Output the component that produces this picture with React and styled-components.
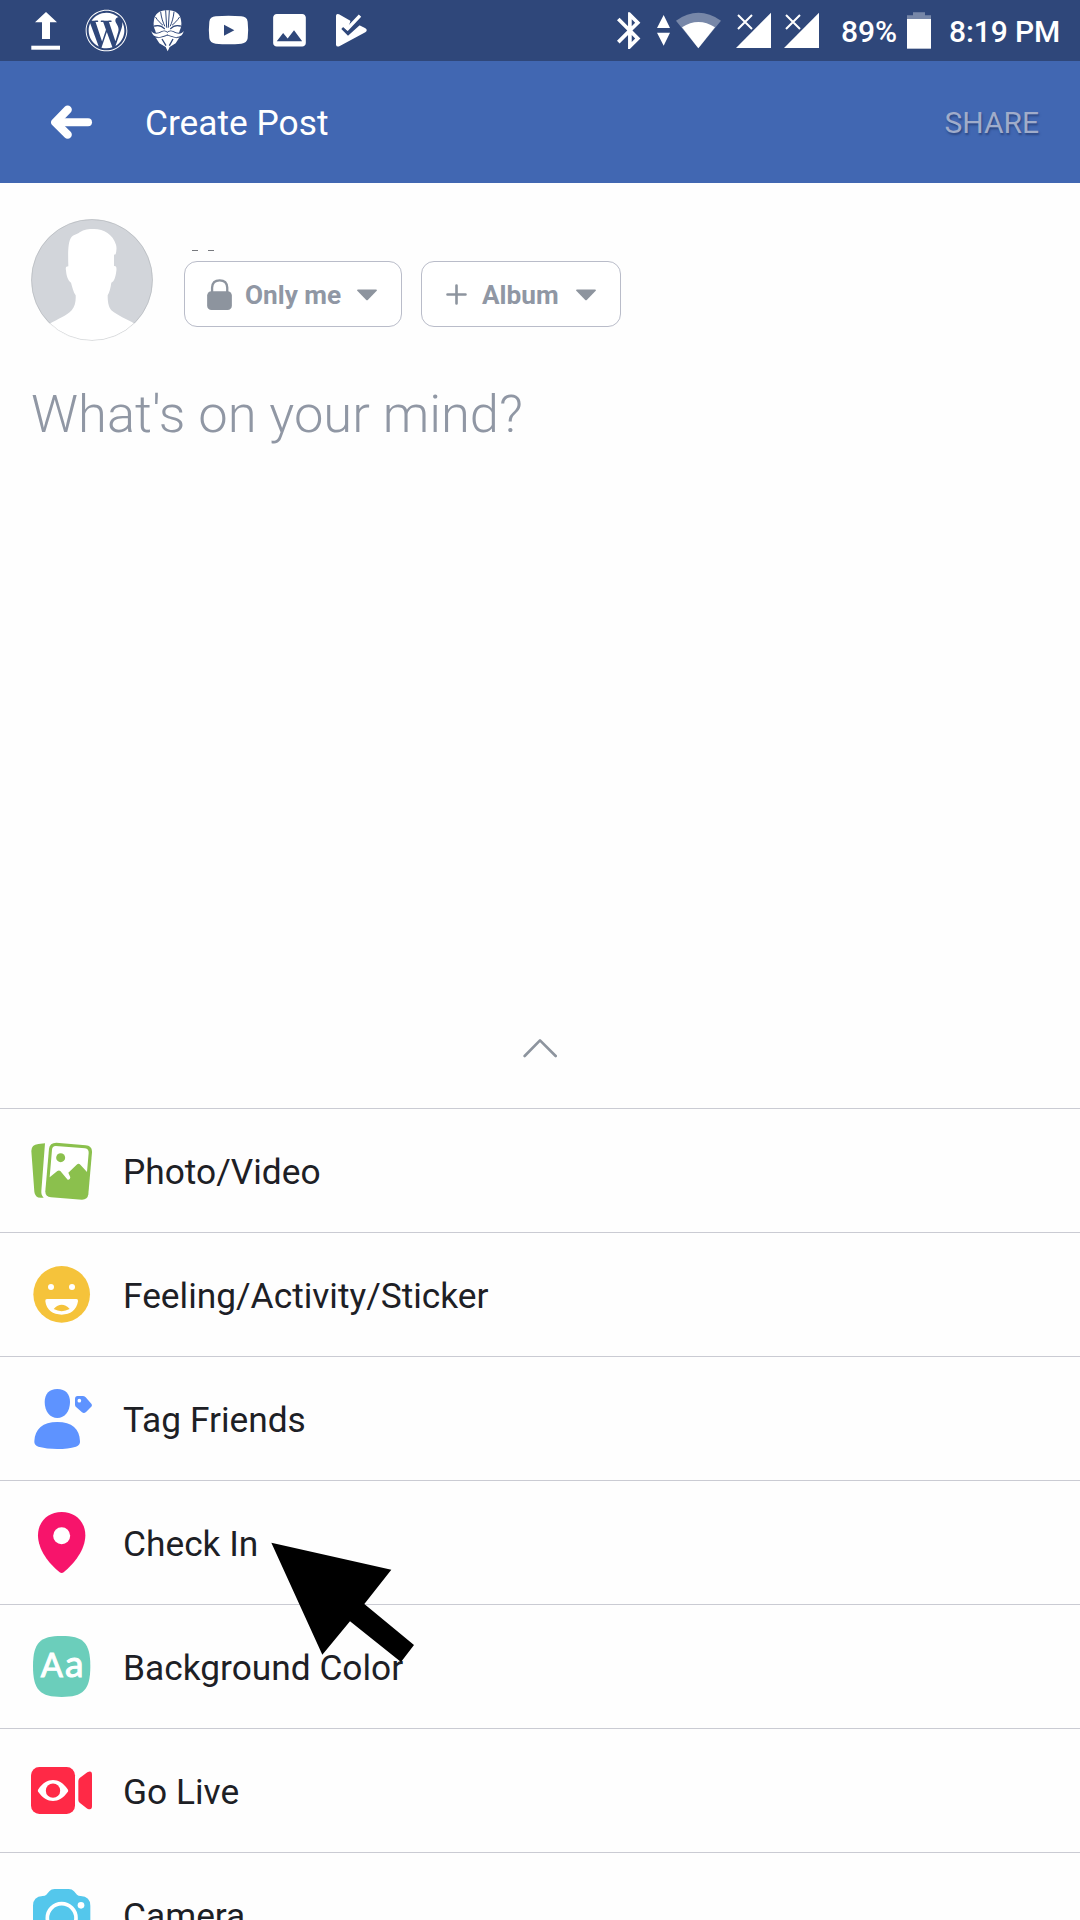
import styled, { createGlobalStyle } from "styled-components"
import { FaWordpress } from "react-icons/fa"

const GlobalStyle = createGlobalStyle`
    * {
      box-sizing: border-box;
    }
    body {
      margin: 0;
      background: #fff;
      font-family: Roboto, "Liberation Sans", sans-serif;
      overflow: hidden;
    }
    svg {
      display: block;
      flex: none;
    }
`

const Screen = styled.div`
    position: relative;
    width: 1080px;
    height: 1920px;
    display: flex;
    flex-direction: column;
    background: #fefefe;
    overflow: hidden;
`

const StatusBar = styled.div`
    flex: none;
    height: 61px;
    padding-left: 15px;
    display: flex;
    justify-content: space-between;
    background: #2f477a;
    color: #fff;
`

const StatusGroup = styled.div`
    display: flex;
    align-items: center;
`

const Slot = styled.div`
    width: 61px;
    height: 61px;
    padding-left: 9px;
    display: flex;
    align-items: center;
`

const StatusText = styled.span`
    width: ${(props) => props.$width}px;
    margin-left: ${(props) => props.$left}px;
    padding-top: 2px;
    font-size: 30px;
    line-height: 36px;
    font-weight: 500;
    white-space: nowrap;
    letter-spacing: ${(props) => props.$spacing || 0}px;
`

const Header = styled.header`
    flex: none;
    height: 122px;
    padding: 0 41px 0 51px;
    display: flex;
    align-items: center;
    background: #4167b2;
`

const Title = styled.h1`
    flex: 1;
    margin: 0 0 0 52px;
    padding-top: 1px;
    color: #fff;
    font-size: 35.300px;
    line-height: 42px;
    font-weight: 400;
`

const Share = styled.button`
    border: none;
    padding: 2px 0 0;
    background: none;
    color: #a0acca;
    font-family: inherit;
    font-size: 30px;
    line-height: 36px;
    text-shadow: 1px 2px 2px rgba(30, 50, 100, 0.6);
`

const Composer = styled.main`
    flex: none;
    height: 925px;
    padding: 36px 31px 0;
    display: flex;
    flex-direction: column;
`

const Author = styled.div`
    display: flex;
    gap: 31px;
`

const AuthorInfo = styled.div`
    display: flex;
    flex-direction: column;
    padding-top: 30px;
`

const Name = styled.div`
    display: flex;
    gap: 10px;
    height: 12px;
    padding-left: 8px;
`

const Dash = styled.span`
    width: 6px;
    height: 1px;
    margin-top: 1px;
    background: #77797e;
`

const Pills = styled.div`
    display: flex;
    gap: 19px;
`

const Pill = styled.button`
    width: ${(props) => props.$width}px;
    height: 66px;
    padding: 1px 24px 0 ${(props) => props.$left}px;
    display: flex;
    align-items: center;
    border: 1px solid #b9bcc9;
    border-radius: 13px;
    background: #fff;
    color: #8d949e;
    font-family: inherit;
    font-size: 26.200px;
    font-weight: 700;
`

const PillLabel = styled.span`
    flex: 1;
    padding-left: ${(props) => props.$left}px;
    color: #9097a4;
    text-align: left;
    white-space: nowrap;
`

const Prompt = styled.p`
    margin: 42px 0 0;
    color: #9097a4;
    font-size: 52.500px;
    line-height: 62px;
    font-weight: 300;
`

const Handle = styled.div`
    margin-top: auto;
    height: 70px;
    display: flex;
    justify-content: center;
`

const Options = styled.ul`
    margin: 0;
    padding: 0;
    list-style: none;
`

const Option = styled.li`
    height: 124px;
    padding-left: 31px;
    display: flex;
    align-items: center;
    gap: 31px;
    border-top: 1px solid #cacbd3;
    color: #1d2025;
    font-size: 35.300px;
    line-height: 42px;
`

const OptionLabel = styled.span`
    padding-top: 3px;
`

const Pointer = styled.svg`
    position: absolute;
    left: 271px;
    top: 1542px;
`

const UploadIcon = () => (
  <svg width="61" height="61" fill="#fff">
    <path d="M31 12L42 22.300H35V39H27V22.300H20Z" />
    <rect x="16.300" y="45.700" width="28.700" height="4" />
  </svg>
)

// bearded mask with swept strands of hair
const MaskIcon = () => (
  <svg width="61" height="61" viewBox="411 0 183 183" fill="#fff">
    <path d="M502 31C478 30 465 42 462 60C459 74 462 84 466 92L470 110L486 125L503 145L519 125L534 110L539 92C543 84 546 74 543 60C540 42 527 30 502 31Z" />
    <path d="M466 111L482 117L494 113L502 110L511 113L523 117L539 111L527 130L509 141L503 154L497 141L478 130Z" />
    <g fill="none" stroke="#2f477a" strokeWidth="3" strokeLinecap="round">
      <path d="M497 32L500 82M508 32L505 82M482 36C484 54 489 67 494 78M522 36C520 54 516 67 511 78M467 52C474 63 481 69 488 75M538 52C531 63 524 69 517 75" />
      <path d="M464 78C475 75 486 78 493 86M541 78C530 75 519 78 512 86" strokeWidth="4" />
    </g>
    <path stroke="#2f477a" strokeWidth="5" paintOrder="stroke" d="M454 93C461 104 473 102 485 96C493 92 499 95 502 99C505 95 512 92 520 96C532 102 544 104 551 93C549 107 538 113 522 110C512 108 506 106 502 103C498 106 493 108 483 110C467 113 457 107 454 93Z" />
    <path fill="none" stroke="#2f477a" strokeWidth="4" d="M486 117L498 137M519 117L508 137" />
  </svg>
)

const YoutubeIcon = () => (
  <svg width="61" height="61" viewBox="594 0 183 183">
    <path fill="#fff" d="M647 49Q686 46 724 49Q741 50 743 65Q746 90 743 115Q741 130 724 131Q686 134 647 131Q630 130 628 115Q625 90 628 65Q630 50 647 49Z" />
    <path fill="#2f477a" d="M672 74V107L703 90.500Z" />
  </svg>
)

const GalleryIcon = () => (
  <svg width="61" height="61" fill="#fff">
    <path transform="translate(8.700 8.500) scale(1.815)" d="M21 19V5c0-1.100-.9-2-2-2H5c-1.100 0-2 .9-2 2v14c0 1.100.9 2 2 2h14c1.100 0 2-.9 2-2zM8.500 13.500l2.500 3.010L14.500 12l4.500 6H5l3.500-4.500z" />
  </svg>
)

const PlayCheckIcon = () => (
  <svg width="61" height="61" viewBox="960 0 183 183">
    <path fill="#fff" d="M1008 47Q1009 39 1017 43L1051 62L1095 84Q1105 90 1096 97L1018 139Q1009 142 1008 134Z" />
    <path fill="#2f477a" d="M1052 61L1072 40L1092 50L1079 76L1044 107L1024 87L1030 80L1042 92Z" />
    <path fill="none" stroke="#fff" strokeWidth="10" d="M1023 69L1043 86L1080 47" />
  </svg>
)

const BluetoothIcon = () => (
  <svg width="40" height="61" fill="#fff">
    <path transform="translate(-2.200 8.500) scale(1.840)" d="M17.710 7.710L12 2h-1v7.590L6.410 5 5 6.410 10.590 12 5 17.590 6.410 19 11 14.410V22h1l5.710-5.710-4.300-4.290 4.300-4.290zM13 5.830l1.880 1.880L13 9.590V5.830zm1.880 10.460L13 18.170v-3.760l1.880 1.880z" />
  </svg>
)

const WifiIcon = () => (
  <svg width="80" height="61" viewBox="150 0 240 183" fill="#fff">
    <path d="M191 45L210 84H171ZM171 98H210L191 137Z" />
    <path opacity=".35" d="M228 62Q295 15 363 62L295 145Z" />
    <path d="M246 82Q295 50 345 82L295 145Z" />
  </svg>
)

const SignalIcon = () => (
  <svg width="48" height="61" viewBox="390 0 144 183">
    <path fill="#fff" d="M513 38V144H408Z" />
    <path fill="none" stroke="#fff" strokeWidth="6" d="M414 45L456 87M456 45L414 87" />
  </svg>
)

const BatteryIcon = () => (
  <svg width="38" height="61" viewBox="906 0 114 183" fill="#fff">
    <path opacity=".35" d="M939 37H975V46H993V60H921V46H939Z" />
    <path d="M921 57H993V146H921Z" />
  </svg>
)

const BackIcon = () => (
  <svg width="42" height="34" viewBox="153 317 126 102" fill="none" stroke="#fff" strokeLinecap="round" strokeLinejoin="round">
    <path strokeWidth="24" d="M177 369H264" />
    <path strokeWidth="25" d="M203 331L166 369L203 406" />
  </svg>
)

const Avatar = () => (
  <svg width="122" height="122" viewBox="93 57 366 366">
    <clipPath id="face">
      <circle cx="276" cy="240" r="182" />
    </clipPath>
    <g clipPath="url(#face)">
      <rect x="93" y="57" width="366" height="366" fill="#d2d5da" />
      <path fill="#fff" d="M205 199C204 160 203 128 214 112C221 103 232 104 239 97C252 88 266 87 282 87C312 87 338 103 348 134C351 145 349 154 347 163L342 164V198C350 197 350 205 349 213C347 229 343 245 334 248C332 263 328 278 323 286C323 305 325 320 334 331C354 348 382 358 404 371L440 440H110L149 371C173 358 200 347 215 331C225 320 228 303 227 286C220 276 217 262 213 248C204 243 199 227 198 211C196 203 198 199 205 199Z" />
    </g>
    <circle cx="276" cy="240" r="181.500" fill="none" stroke="#a5a8ad" strokeWidth="2" opacity=".7" />
    <path d="M149 371A181.500 181.500 0 0 0 404 371" fill="none" stroke="#fff" strokeWidth="3" opacity=".65" />
  </svg>
)

const LockIcon = () => (
  <svg width="25" height="31" viewBox="621 236 75 94">
    <path fill="none" stroke="#8d949e" strokeWidth="7" d="M636 278V262Q637 240 659 240Q681 240 682 262V278" />
    <rect x="621" y="273" width="75" height="57" rx="13" fill="#8d949e" />
  </svg>
)

const PlusIcon = () => (
  <svg width="21" height="21" fill="none" stroke="#8d949e" strokeWidth="2.600" strokeLinecap="round">
    <path d="M10.500 1.500V19.500M1.500 10.500H19.500" />
  </svg>
)

const CaretIcon = () => (
  <svg width="20" height="12" fill="#8d949e">
    <path d="M1 .5H19Q20.500 .7 19.500 2L11 10.700Q10 11.700 9 10.700L.5 2Q-.5 .7 1 .5Z" />
  </svg>
)

const ChevronIcon = () => (
  <svg width="34" height="20" viewBox="129 84 102 60" fill="none" stroke="#8d949e" strokeWidth="8" strokeLinecap="round" strokeLinejoin="round">
    <path d="M134 138L180 91L227 138" />
  </svg>
)

const PhotoIcon = () => (
  <svg width="61" height="61" viewBox="93 120 183 183">
    <path fill="#8bc04d" d="M115 132L135 130L124 273Q123 286 131 293H122Q105 293 103 275L94 153Q94 134 115 132Z" />
    <path fill="#8bc04d" d="M169 128L257 136Q277 138 276 157L265 283Q263 299 246 299L153 292Q135 290 136 273L147 146Q149 128 169 128Z" />
    <path fill="#fff" d="M167 138L255 145Q267 147 266 159L261 216L241 194Q236 189 230 194L205 218L211 232Q210 241 203 239L181 213Q177 210 172 213L149 232L156 149Q157 138 167 138Z" />
    <circle cx="182" cy="173" r="13.500" fill="#8bc04d" />
  </svg>
)

const SmileIcon = () => (
  <svg width="61" height="61" viewBox="93 492 183 183">
    <circle cx="185" cy="583" r="85" fill="#f5c33b" />
    <g fill="#fff">
      <circle cx="153" cy="561" r="9" />
      <circle cx="216" cy="561" r="9" />
      <path d="M141 597H229Q235 597 234 604C230 630 211 644 185 644S139 630 136 604Q135 597 141 597Z" />
    </g>
    <path fill="#f5c33b" d="M161 627Q185 602 209 627Q185 640 161 627Z" />
  </svg>
)

const TagIcon = () => (
  <svg width="61" height="61" viewBox="93 114 183 183">
    <g fill="#5e93ff">
      <path d="M172 117C197 117 210 133 210 156C210 184 194 204 172 204S134 184 134 156C134 133 147 117 172 117Z" />
      <path d="M172 216C216 216 239 236 240 274Q241 286 228 290Q204 297 172 297T115 290Q102 286 103 274C105 236 128 216 172 216Z" />
      <path d="M233 138H248Q253 138 257 142L274 161Q278 166 273 171L258 186Q252 192 246 187L229 172Q225 169 225 164V147Q225 138 233 138Z" />
    </g>
    <circle cx="238" cy="152" r="5.500" fill="#fff" />
  </svg>
)

const PinIcon = () => (
  <svg width="61" height="61" viewBox="93 486 183 183">
    <path fill="#f7146b" d="M185 486C226 486 256 515 256 556C256 599 223 641 191 667Q185 671 179 667C146 641 114 599 114 556C114 515 144 486 185 486Z" />
    <circle cx="185" cy="557" r="25.500" fill="#fff" />
  </svg>
)

const ColorIcon = () => (
  <svg width="61" height="61" viewBox="93 108 183 183" fill="#fff" fontFamily="Lato, sans-serif">
    <path fill="#6bcebb" d="M185 108C249 108 271 127 271 199S249 291 185 291S99 271 99 199S121 108 185 108Z" />
    <text x="122" y="230" fontWeight="400" fontSize="98" stroke="#fff" strokeWidth="3">
      A<tspan x="195" fontSize="112">a</tspan>
    </text>
  </svg>
)

const LiveIcon = () => (
  <svg width="61" height="61" viewBox="93 480 183 183">
    <rect x="93" y="501" width="132" height="141" rx="25" fill="#ff2946" />
    <path fill="#ff2946" d="M262 517Q276 510 276 524V619Q276 632 262 626L239 608Q235 605 235 600V543Q235 538 239 534Z" />
    <path fill="#fff" d="M115 568C140 531 178 531 203 568Q206 572 203 576C178 612 140 612 115 576Q112 572 115 568Z" />
    <circle cx="159" cy="572" r="21.500" fill="#ff2946" />
  </svg>
)

const CameraIcon = () => (
  <svg width="61" height="61" viewBox="93 852 183 183">
    <path fill="#54c7ec" d="M164 867H206Q216 867 222 874L231 884Q235 888 242 888Q271 890 271 917V995Q271 1024 242 1024H128Q99 1024 99 995V917Q99 890 128 888Q135 888 139 884L148 874Q154 867 164 867Z" />
    <circle cx="185" cy="954" r="43" fill="none" stroke="#fff" strokeWidth="11" />
    <circle cx="243" cy="916" r="10" fill="#fff" />
  </svg>
)

const options = [
  { label: "Photo/Video", Icon: PhotoIcon },
  { label: "Feeling/Activity/Sticker", Icon: SmileIcon },
  { label: "Tag Friends", Icon: TagIcon },
  { label: "Check In", Icon: PinIcon },
  { label: "Background Color", Icon: ColorIcon },
  { label: "Go Live", Icon: LiveIcon },
  { label: "Camera", Icon: CameraIcon },
]

const App = () => {
  return (
    <Screen>
      <GlobalStyle />
      <StatusBar>
        <StatusGroup>
          <UploadIcon />
          <Slot><FaWordpress size={43} /></Slot>
          <MaskIcon />
          <YoutubeIcon />
          <GalleryIcon />
          <PlayCheckIcon />
        </StatusGroup>
        <StatusGroup>
          <BluetoothIcon />
          <WifiIcon />
          <SignalIcon />
          <SignalIcon />
          <StatusText $width={61} $left={15}>89%</StatusText>
          <BatteryIcon />
          <StatusText $width={131} $left={9} $spacing={-0.1}>8:19 PM</StatusText>
        </StatusGroup>
      </StatusBar>
      <Header>
        <BackIcon />
        <Title>Create Post</Title>
        <Share>SHARE</Share>
      </Header>
      <Composer>
        <Author>
          <Avatar />
          <AuthorInfo>
            <Name>
              <Dash />
              <Dash />
            </Name>
            <Pills>
              <Pill $width={218} $left={22}>
                <LockIcon />
                <PillLabel $left={13}>Only me</PillLabel>
                <CaretIcon />
              </Pill>
              <Pill $width={200} $left={24}>
                <PlusIcon />
                <PillLabel $left={15}>Album</PillLabel>
                <CaretIcon />
              </Pill>
            </Pills>
          </AuthorInfo>
        </Author>
        <Prompt>What's on your mind?</Prompt>
        <Handle>
          <ChevronIcon />
        </Handle>
      </Composer>
      <Options>
        {options.map(({ label, Icon }) => (
          <Option key={label}>
            <Icon />
            <OptionLabel>{label}</OptionLabel>
          </Option>
        ))}
      </Options>
      <Pointer width="144" height="120" viewBox="63 126 432 360">
        <path d="M64 128L424 209L343 312L492 435L453 486L300 364L217 464Z" />
      </Pointer>
    </Screen>
  )
}

export default App;
